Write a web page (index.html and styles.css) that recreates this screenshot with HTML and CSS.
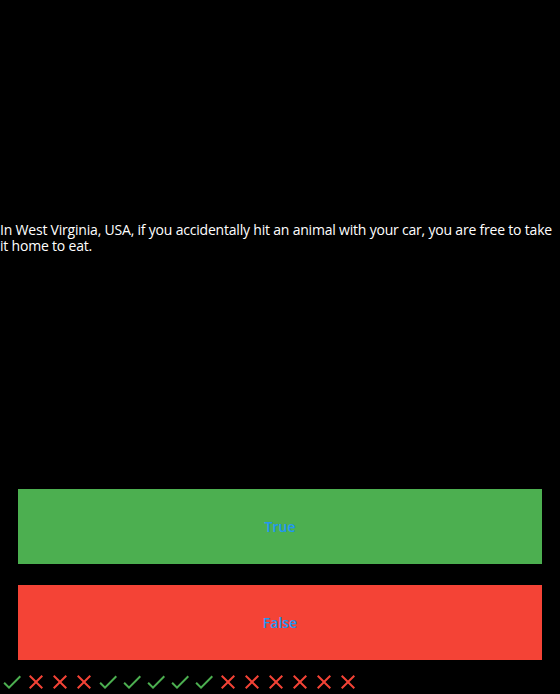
FILE: index.html
```html
<!DOCTYPE html>
<html>
<head>
<meta charset="utf-8">
<link rel="stylesheet" href="styles.css">
</head>
<body>
<div class="app">
  <div class="question">
    <p class="question-text">In West Virginia, USA, if you accidentally hit an animal with your car, you are free to take it home to eat.</p>
  </div>
  <div class="answers">
    <button class="answer answer-true">True</button>
    <button class="answer answer-false">False</button>
  </div>
  <div class="score">
    <svg class="icon ok" viewBox="0 0 24 24"><path d="M9 16.17L4.83 12l-1.42 1.41L9 19 21 7l-1.41-1.41z"/></svg>
    <svg class="icon bad" viewBox="0 0 24 24"><path d="M19 6.41L17.59 5 12 10.59 6.41 5 5 6.41 10.59 12 5 17.59 6.41 19 12 13.41 17.59 19 19 17.59 13.41 12z"/></svg>
    <svg class="icon bad" viewBox="0 0 24 24"><path d="M19 6.41L17.59 5 12 10.59 6.41 5 5 6.41 10.59 12 5 17.59 6.41 19 12 13.41 17.59 19 19 17.59 13.41 12z"/></svg>
    <svg class="icon bad" viewBox="0 0 24 24"><path d="M19 6.41L17.59 5 12 10.59 6.41 5 5 6.41 10.59 12 5 17.59 6.41 19 12 13.41 17.59 19 19 17.59 13.41 12z"/></svg>
    <svg class="icon ok" viewBox="0 0 24 24"><path d="M9 16.17L4.83 12l-1.42 1.41L9 19 21 7l-1.41-1.41z"/></svg>
    <svg class="icon ok" viewBox="0 0 24 24"><path d="M9 16.17L4.83 12l-1.42 1.41L9 19 21 7l-1.41-1.41z"/></svg>
    <svg class="icon ok" viewBox="0 0 24 24"><path d="M9 16.17L4.83 12l-1.42 1.41L9 19 21 7l-1.41-1.41z"/></svg>
    <svg class="icon ok" viewBox="0 0 24 24"><path d="M9 16.17L4.83 12l-1.42 1.41L9 19 21 7l-1.41-1.41z"/></svg>
    <svg class="icon ok" viewBox="0 0 24 24"><path d="M9 16.17L4.83 12l-1.42 1.41L9 19 21 7l-1.41-1.41z"/></svg>
    <svg class="icon bad" viewBox="0 0 24 24"><path d="M19 6.41L17.59 5 12 10.59 6.41 5 5 6.41 10.59 12 5 17.59 6.41 19 12 13.41 17.59 19 19 17.59 13.41 12z"/></svg>
    <svg class="icon bad" viewBox="0 0 24 24"><path d="M19 6.41L17.59 5 12 10.59 6.41 5 5 6.41 10.59 12 5 17.59 6.41 19 12 13.41 17.59 19 19 17.59 13.41 12z"/></svg>
    <svg class="icon bad" viewBox="0 0 24 24"><path d="M19 6.41L17.59 5 12 10.59 6.41 5 5 6.41 10.59 12 5 17.59 6.41 19 12 13.41 17.59 19 19 17.59 13.41 12z"/></svg>
    <svg class="icon bad" viewBox="0 0 24 24"><path d="M19 6.41L17.59 5 12 10.59 6.41 5 5 6.41 10.59 12 5 17.59 6.41 19 12 13.41 17.59 19 19 17.59 13.41 12z"/></svg>
    <svg class="icon bad" viewBox="0 0 24 24"><path d="M19 6.41L17.59 5 12 10.59 6.41 5 5 6.41 10.59 12 5 17.59 6.41 19 12 13.41 17.59 19 19 17.59 13.41 12z"/></svg>
    <svg class="icon bad" viewBox="0 0 24 24"><path d="M19 6.41L17.59 5 12 10.59 6.41 5 5 6.41 10.59 12 5 17.59 6.41 19 12 13.41 17.59 19 19 17.59 13.41 12z"/></svg>
  </div>
</div>
</body>
</html>
```
FILE: styles.css
```css
html, body {
  margin: 0;
  padding: 0;
  background: #000;
  height: 100%;
}
.app {
  height: 694px;
  display: flex;
  flex-direction: column;
  font-family: "Open Sans", "DejaVu Sans", sans-serif;
}
.question {
  height: 479px;
  box-sizing: border-box;
  padding-bottom: 3px;
  display: flex;
  align-items: center;
}
.question-text {
  margin: 0;
  color: #fff;
  font-size: 14px;
  line-height: 16px;
  letter-spacing: -0.2px;
}
.answers {
  display: flex;
  flex-direction: column;
  gap: 21px;
  padding: 10px 18px;
}
.answer {
  height: 75px;
  border: 0;
  margin: 0;
  padding: 0;
  font-family: inherit;
  font-size: 14px;
  font-weight: 600;
  color: #2196F3;
}
.answer-true { background: #4CAF50; }
.answer-false { background: #F44336; }
.score {
  display: flex;
  height: 24px;
}
.icon {
  width: 24px;
  height: 24px;
  flex: none;
}
.ok { fill: #4CAF50; }
.bad { fill: #F44336; }
```
